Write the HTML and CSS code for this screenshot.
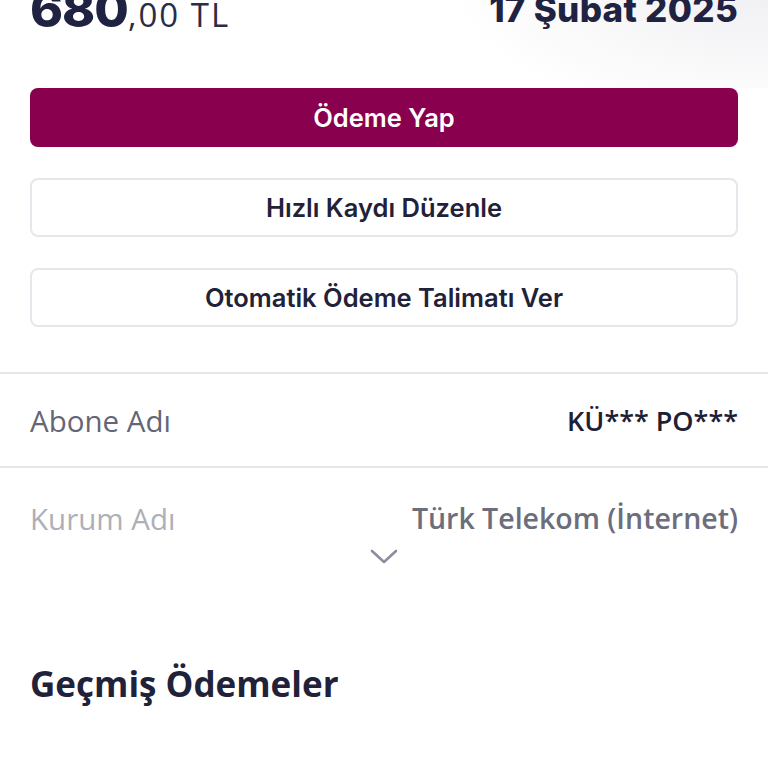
FILE: index.html
```html
<!DOCTYPE html>
<html lang="tr">
<head>
<meta charset="utf-8">
<link rel="stylesheet" href="styles.css">
</head>
<body>
<div class="page">
  <div class="summary">
    <div class="amount"><span class="amount-int">680</span><span class="amount-dec">,00 TL</span></div>
    <div class="date">17 Şubat 2025</div>
  </div>
  <div class="actions">
    <button class="btn btn-primary">Ödeme Yap</button>
    <button class="btn btn-outline">Hızlı Kaydı Düzenle</button>
    <button class="btn btn-outline">Otomatik Ödeme Talimatı Ver</button>
  </div>
  <div class="details">
    <div class="row">
      <span class="row-label">Abone Adı</span>
      <span class="row-value">KÜ*** PO***</span>
    </div>
    <div class="row row-faded">
      <span class="row-label">Kurum Adı</span>
      <span class="row-value">Türk Telekom (İnternet)</span>
    </div>
    <div class="expander">
      <svg width="28" height="16" viewBox="0 0 28 16"><path d="M2 2 L14 13 L26 2" fill="none" stroke="#8b8da0" stroke-width="2.6" stroke-linecap="round" stroke-linejoin="round"/></svg>
    </div>
  </div>
  <h2 class="section-title">Geçmiş Ödemeler</h2>
</div>
</body>
</html>
```
FILE: styles.css
```css
* { box-sizing: border-box; }
html, body { margin: 0; padding: 0; background: #fff; }
body { font-family: "Inter", "Noto Sans", sans-serif; color: #1f2238; overflow: hidden; height: 768px; }
.page { width: 768px; }

.summary {
  display: flex;
  justify-content: space-between;
  align-items: baseline;
  padding: 0 30px 0 30px;
  margin-top: -16px;
  height: 104px;
  background: radial-gradient(ellipse 320px 140px at 768px 0px, #efeff2 0%, #ffffff 100%);
}
.amount { line-height: 1; color: #1f2240; }
.amount-int { font-size: 50px; font-weight: 800; letter-spacing: -1px; }
.amount-dec { font-size: 33px; font-weight: 400; color: #2a2d45; font-family: "Open Sans", sans-serif; letter-spacing: 2px; }
.date { align-self: flex-start; margin-top: 8px; font-size: 35px; font-weight: 800; color: #1f2240; line-height: 1; letter-spacing: 0.3px; }

.actions {
  display: flex;
  flex-direction: column;
  gap: 31px;
  padding: 0 30px;
}
.btn {
  height: 59px;
  width: 100%;
  border-radius: 8px;
  font-family: "Inter", sans-serif;
  font-size: 25.5px;
  font-weight: 600;
  cursor: pointer;
}
.btn-primary { background: #89004f; color: #fff; border: none; }
.btn-outline { background: #fff; color: #1f2238; border: 2px solid #e6e6ec; }

.details { margin-top: 45px; border-top: 2px solid #e6e6ec; }
.row {
  display: flex;
  justify-content: space-between;
  align-items: center;
  height: 94px;
  padding: 0 30px;
  font-family: "Open Sans", sans-serif;
  font-size: 27px;
  border-bottom: 2px solid #e6e6ec;
}
.row-label { color: #646675; font-weight: 400; font-size: 29.5px; }
.row-value { color: #1e2034; font-weight: 600; }
.row-faded { border-bottom: none; height: 100px; }
.row-faded .row-label { color: #aeafb8; }
.row-faded .row-value { color: #6c6e7c; font-size: 28.5px; }
.expander { display: flex; justify-content: center; margin-top: -19px; }

.section-title {
  margin: 95px 0 0 0;
  padding: 0 30px;
  font-family: "Open Sans", sans-serif;
  font-size: 35px;
  font-weight: 700;
  color: #1f2238;
}
```
